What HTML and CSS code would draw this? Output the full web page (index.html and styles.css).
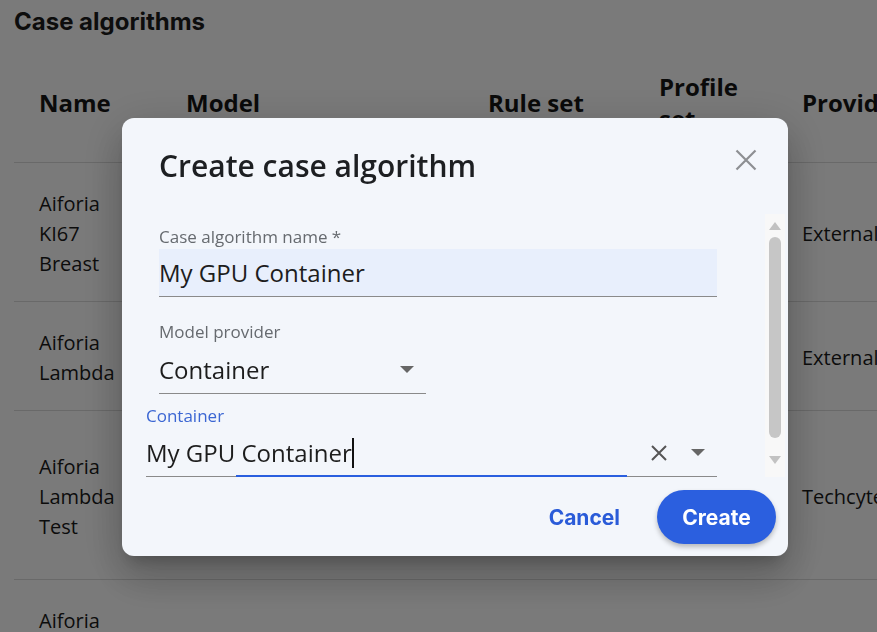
FILE: index.html
```html
<!DOCTYPE html>
<html lang="en">
<head>
<meta charset="utf-8">
<title>Case algorithms</title>
<link rel="stylesheet" href="styles.css">
</head>
<body>
<main class="page">
  <h1 class="page-title">Case algorithms</h1>
  <table class="algos">
    <colgroup>
      <col class="c-name"><col class="c-model"><col class="c-rule"><col class="c-profile"><col class="c-provider">
    </colgroup>
    <thead>
      <tr><th>Name</th><th>Model</th><th>Rule set</th><th>Profile set</th><th>Provider</th></tr>
    </thead>
    <tbody>
      <tr><td>Aiforia KI67 Breast</td><td></td><td></td><td></td><td>External</td></tr>
      <tr><td>Aiforia Lambda</td><td></td><td></td><td></td><td>External</td></tr>
      <tr class="row-tall"><td>Aiforia Lambda Test</td><td></td><td></td><td></td><td>Techcyte</td></tr>
      <tr><td>Aiforia</td><td></td><td></td><td></td><td></td></tr>
    </tbody>
  </table>
</main>

<div class="backdrop"></div>

<section class="dialog" role="dialog" aria-labelledby="dlg-title">
  <header class="dialog-head">
    <h2 id="dlg-title" class="dialog-title">Create case algorithm</h2>
    <button class="close-btn" aria-label="Close">
      <svg width="24" height="24" viewBox="0 0 24 24"><path d="M2.5 2.5 L21.5 21.5 M21.5 2.5 L2.5 21.5" stroke="#8d8f92" stroke-width="2.2" fill="none"/></svg>
    </button>
  </header>

  <div class="dialog-body">
    <div class="fields">
      <div class="field field-name">
        <label class="field-label">Case algorithm name *</label>
        <div class="input filled">My GPU Container</div>
      </div>

      <div class="field field-provider">
        <label class="field-label">Model provider</label>
        <div class="input select">
          <span class="value">Container</span>
          <svg class="tri" width="14" height="7" viewBox="0 0 14 7"><path d="M0 0 L14 0 L7 7 Z" fill="#666"/></svg>
        </div>
      </div>

      <div class="field field-container">
        <label class="field-label focused">Container</label>
        <div class="input select focus">
          <span class="value">My GPU Container<i class="caret"></i></span>
          <svg class="clear" width="18" height="18" viewBox="0 0 18 18"><path d="M2 2 L16 16 M16 2 L2 16" stroke="#555" stroke-width="2" fill="none"/></svg>
          <svg class="tri" width="14" height="7" viewBox="0 0 14 7"><path d="M0 0 L14 0 L7 7 Z" fill="#666"/></svg>
          <i class="focus-line"></i>
        </div>
      </div>
    </div>

    <div class="scrollbar">
      <svg width="12" height="8" viewBox="0 0 12 8"><path d="M0 8 L6 0 L12 8 Z" fill="#c2c2c2"/></svg>
      <div class="thumb"></div>
      <svg width="12" height="8" viewBox="0 0 12 8"><path d="M0 0 L12 0 L6 8 Z" fill="#c2c2c2"/></svg>
    </div>
  </div>

  <footer class="dialog-foot">
    <button class="btn-text">Cancel</button>
    <button class="btn-primary">Create</button>
  </footer>
</section>
</body>
</html>
```
FILE: styles.css
```css
* { box-sizing: border-box; }
html, body { margin: 0; padding: 0; }
body {
  width: 877px;
  height: 632px;
  overflow: hidden;
  background: #ffffff;
  font-family: "Open Sans", "Noto Sans", sans-serif;
  color: #1a1a1a;
}

.page { padding: 7px 0 0 14px; }
.page-title {
  margin: 0;
  font-family: Inter, "Liberation Sans", sans-serif;
  font-weight: 700;
  font-size: 24px;
  line-height: 30px;
  color: #1c1c1c;
}

.algos {
  margin-top: 9px;
  border-collapse: collapse;
  table-layout: fixed;
  width: 980px;
}
.c-name { width: 147px; }
.c-model { width: 302px; }
.c-rule { width: 171px; }
.c-profile { width: 143px; }
.c-provider { width: 217px; }

.algos th {
  text-align: left;
  font-weight: 700;
  font-size: 24px;
  line-height: 32px;
  padding: 25px 25px 27px;
  vertical-align: middle;
  border-bottom: 1px solid #dcdcdc;
  color: #151515;
}
.algos td {
  font-size: 20px;
  line-height: 30px;
  padding: 26px 25px 22px;
  vertical-align: middle;
  border-bottom: 1px solid #dcdcdc;
  color: #1a1a1a;
}
.algos .row-tall td { height: 169px; }

.backdrop {
  position: fixed;
  inset: 0;
  background: rgba(0, 0, 0, 0.52);
}

.dialog {
  position: fixed;
  left: 122px;
  top: 118px;
  width: 666px;
  height: 438px;
  background: #f3f6fb;
  border-radius: 12px;
  box-shadow: 0 11px 15px -7px rgba(0,0,0,.2), 0 24px 38px 3px rgba(0,0,0,.14), 0 9px 46px 8px rgba(0,0,0,.12);
  display: flex;
  flex-direction: column;
}

.dialog-head {
  position: relative;
  height: 96px;
  padding: 27px 0 0 37px;
}
.dialog-title {
  margin: 0;
  font-size: 30px;
  font-weight: 600;
  line-height: 42px;
  color: #1d1f22;
}
.close-btn {
  position: absolute;
  left: 612px;
  top: 30px;
  width: 24px;
  height: 24px;
  padding: 0;
  border: 0;
  background: none;
  display: block;
}
.close-btn svg { display: block; }

.dialog-body {
  display: flex;
  height: 263px;
  padding-left: 24px;
}
.fields {
  width: 619px;
  overflow: hidden;
  padding-top: 13px;
}
.field { display: flex; flex-direction: column; }
.field-label {
  font-size: 17px;
  line-height: 20px;
  color: #666a6f;
}
.field-label.focused { color: #3b66d3; }

.input {
  position: relative;
  height: 48px;
  display: flex;
  align-items: center;
  font-size: 24px;
  color: #1d1d1d;
  border-bottom: 1px solid #8a8a8a;
}
.field-name, .field-provider { margin-left: 13px; }
.field-name .field-label { margin-bottom: 2px; }
.field-name .input { width: 558px; }
.input.filled { background: #e8effc; }

.field-provider { margin-top: 25px; }
.field-provider .field-label { margin-bottom: 4px; }
.field-provider .input { width: 267px; }

.select .value { flex: 1; display: flex; align-items: center; }
.select .tri { margin-right: 12px; }

.field-container { margin-top: 12px; }
.field-container .field-label { margin-bottom: 3px; }
.field-container .input { width: 571px; }
.caret {
  display: block;
  width: 2px;
  height: 30px;
  background: #111;
}
.clear { margin-right: 23px; }
.focus-line {
  position: absolute;
  left: 90px;
  bottom: -1px;
  width: 391px;
  height: 2px;
  background: #2a5fdf;
}

.scrollbar {
  width: 20px;
  background: #f8f8f8;
  display: flex;
  flex-direction: column;
  align-items: center;
  padding: 8px 0 6px;
}
.scrollbar svg { display: block; }
.thumb {
  width: 12px;
  height: 201px;
  margin: 7px 0 18px;
  background: #c6c6c6;
  border-radius: 6px;
}

.dialog-foot {
  display: flex;
  justify-content: flex-end;
  align-items: center;
  gap: 25px;
  padding: 13px 12px 12px 0;
}
.btn-text, .btn-primary {
  font-family: Inter, "Liberation Sans", sans-serif;
  font-weight: 700;
  font-size: 21px;
  border: 0;
  cursor: pointer;
}
.btn-text {
  background: none;
  color: #2a5bd8;
  padding: 0 12px;
  height: 54px;
}
.btn-primary {
  width: 119px;
  height: 54px;
  border-radius: 27px;
  background: #2b5fdf;
  color: #ffffff;
  box-shadow: 0 3px 5px rgba(0,0,0,.25);
}
```
